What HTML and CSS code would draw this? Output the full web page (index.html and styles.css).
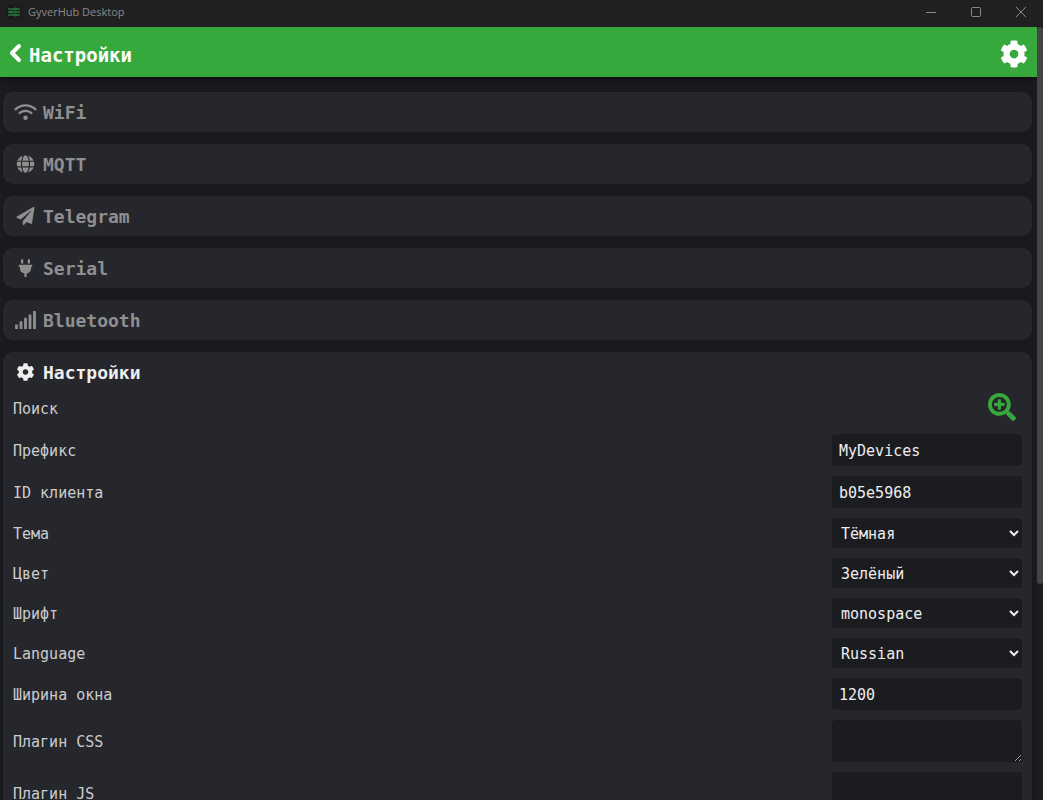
FILE: index.html
```html
<!DOCTYPE html>
<html lang="ru">
<head>
    <meta charset="UTF-8">
    <meta name="viewport" content="width=device-width, initial-scale=1.0">
    <title>GyverHub Desktop</title>
    <link rel="stylesheet" href="styles.css">
</head>
<body>
    <div class="titlebar">
        <svg class="app-icon" viewBox="0 0 16 16">
            <path d="M2 5h6M11 5h3M2 8h2M7 8h7M2 11h6M11 11h3"/>
            <circle cx="9.5" cy="5" r="1"/>
            <circle cx="5.5" cy="8" r="1"/>
            <circle cx="9.5" cy="11" r="1"/>
        </svg>
        <span class="app-name">GyverHub Desktop</span>
        <div class="win-buttons">
            <button aria-label="Свернуть"><svg viewBox="0 0 10 10"><path d="M0 5.5h10"/></svg></button>
            <button aria-label="Развернуть"><svg viewBox="0 0 10 10"><rect x=".5" y=".5" width="9" height="9" rx="1"/></svg></button>
            <button aria-label="Закрыть"><svg viewBox="0 0 10 10"><path d="M0 0l10 10M10 0L0 10"/></svg></button>
        </div>
    </div>

    <div class="window">
        <div class="page">
            <header class="header">
                <button class="back">
                    <svg viewBox="0 0 14 22"><path d="M11 4L4 11l7 7"/></svg>
                    <span>Настройки</span>
                </button>
                <button class="menu" aria-label="Меню">
                    <svg viewBox="0 0 512 512"><path d="M487.4 315.7l-42.6-24.6c4.3-23.2 4.3-47 0-70.2l42.6-24.6c4.9-2.8 7.1-8.6 5.5-14-11.1-35.6-30-67.8-54.7-94.6-3.8-4.1-10-5.1-14.8-2.3L380.8 110c-17.9-15.4-38.5-27.3-60.8-35.1V25.8c0-5.6-3.9-10.5-9.4-11.7-36.7-8.2-74.3-7.8-109.2 0-5.5 1.2-9.4 6.1-9.4 11.7V75c-22.2 7.9-42.8 19.8-60.8 35.1L88.7 85.5c-4.9-2.8-11-1.9-14.8 2.3-24.7 26.7-43.6 58.9-54.7 94.6-1.7 5.4.6 11.2 5.5 14L67.3 221c-4.3 23.2-4.3 47 0 70.2l-42.6 24.6c-4.9 2.8-7.1 8.6-5.5 14 11.1 35.6 30 67.8 54.7 94.6 3.8 4.1 10 5.1 14.8 2.3l42.6-24.6c17.9 15.4 38.5 27.3 60.8 35.1v49.2c0 5.6 3.9 10.5 9.4 11.7 36.7 8.2 74.3 7.8 109.2 0 5.5-1.2 9.4-6.1 9.4-11.7v-49.2c22.2-7.9 42.8-19.8 60.8-35.1l42.6 24.6c4.9 2.8 11 1.9 14.8-2.3 24.7-26.7 43.6-58.9 54.7-94.6 1.5-5.5-.7-11.3-5.6-14.1zM256 336c-44.1 0-80-35.9-80-80s35.9-80 80-80 80 35.9 80 80-35.9 80-80 80z"/></svg>
                </button>
            </header>

            <main class="cards">
                <section class="card">
                    <button class="card-title">
                        <svg viewBox="0 0 640 512"><path d="M54.2 202.9C123.2 136.7 216.8 96 320 96s196.8 40.7 265.8 106.9c12.8 12.2 33 11.8 45.2-.9s11.8-33-.9-45.2C549.7 79.5 440.4 32 320 32S90.3 79.5 9.8 156.7C-2.9 169-3.3 189.2 8.9 202s32.5 13.2 45.2.9zM320 256c56.8 0 108.6 21.1 148.2 56 13.3 11.7 33.5 10.4 45.2-2.8s10.4-33.5-2.8-45.2C459.8 219.2 393 192 320 192s-139.8 27.2-190.5 72c-13.3 11.7-14.5 31.9-2.8 45.2s31.9 14.5 45.2 2.8c39.5-34.9 91.3-56 148.2-56zm64 160a64 64 0 1 0-128 0 64 64 0 1 0 128 0z"/></svg>
                        WiFi
                    </button>
                </section>
                <section class="card">
                    <button class="card-title">
                        <svg viewBox="0 0 496 512"><path d="M336.5 160C322 70.7 287.8 8 248 8s-74 62.7-88.5 152h177zM152 256c0 22.2 1.2 43.5 3.3 64h185.3c2.1-20.5 3.3-41.8 3.3-64s-1.2-43.5-3.3-64H155.3c-2.1 20.5-3.3 41.8-3.3 64zm324.7-96c-28.6-67.9-86.5-120.4-158-141.6 24.4 33.8 41.2 84.7 50 141.6h108zM177.2 18.4C105.8 39.6 47.8 92.1 19.3 160h108c8.7-56.9 25.5-107.8 49.9-141.6zM487.4 192H372.7c2.1 21 3.3 42.5 3.3 64s-1.2 43-3.3 64h114.6c5.5-20.5 8.6-41.8 8.6-64s-3.1-43.5-8.5-64zM120 256c0-21.5 1.2-43 3.3-64H8.6C3.2 212.5 0 233.8 0 256s3.2 43.5 8.6 64h114.6c-2-21-3.2-42.5-3.2-64zm39.5 96c14.5 89.3 48.7 152 88.5 152s74-62.7 88.5-152h-177zm159.3 141.6c71.4-21.2 129.4-73.7 158-141.6h-108c-8.8 56.9-25.6 107.8-50 141.6zM19.3 352c28.6 67.9 86.5 120.4 158 141.6-24.4-33.8-41.2-84.7-50-141.6h-108z"/></svg>
                        MQTT
                    </button>
                </section>
                <section class="card">
                    <button class="card-title">
                        <svg viewBox="0 0 512 512"><path d="M476 3.2L12.5 270.6c-18.1 10.4-15.8 35.6 2.2 43.2L121 358.4l287.3-253.2c5.5-4.9 13.3 2.6 8.6 8.3L176 407v80.5c0 23.6 28.5 32.9 42.5 15.8L282 426l124.6 52.2c14.2 6 30.4-2.9 33-18.2l72-432C515 7.8 493.3-6.8 476 3.2z"/></svg>
                        Telegram
                    </button>
                </section>
                <section class="card">
                    <button class="card-title">
                        <svg viewBox="0 0 384 512"><path d="M320 32a32 32 0 0 0-64 0v96h64zm48 128H16A16 16 0 0 0 0 176v32a16 16 0 0 0 16 16h16v32a160.07 160.07 0 0 0 128 156.8V512h64v-99.2A160.07 160.07 0 0 0 352 256v-32h16a16 16 0 0 0 16-16v-32a16 16 0 0 0-16-16zM128 32a32 32 0 0 0-64 0v96h64z"/></svg>
                        Serial
                    </button>
                </section>
                <section class="card">
                    <button class="card-title">
                        <svg viewBox="0 0 640 512">
                            <rect x="24" y="384" width="80" height="128" rx="16"/>
                            <rect x="152" y="288" width="80" height="224" rx="16"/>
                            <rect x="280" y="192" width="80" height="320" rx="16"/>
                            <rect x="408" y="96" width="80" height="416" rx="16"/>
                            <rect x="536" y="0" width="80" height="512" rx="16"/>
                        </svg>
                        Bluetooth
                    </button>
                </section>
                <section class="card open">
                    <button class="card-title">
                        <svg viewBox="0 0 512 512"><path d="M487.4 315.7l-42.6-24.6c4.3-23.2 4.3-47 0-70.2l42.6-24.6c4.9-2.8 7.1-8.6 5.5-14-11.1-35.6-30-67.8-54.7-94.6-3.8-4.1-10-5.1-14.8-2.3L380.8 110c-17.9-15.4-38.5-27.3-60.8-35.1V25.8c0-5.6-3.9-10.5-9.4-11.7-36.7-8.2-74.3-7.8-109.2 0-5.5 1.2-9.4 6.1-9.4 11.7V75c-22.2 7.9-42.8 19.8-60.8 35.1L88.7 85.5c-4.9-2.8-11-1.9-14.8 2.3-24.7 26.7-43.6 58.9-54.7 94.6-1.7 5.4.6 11.2 5.5 14L67.3 221c-4.3 23.2-4.3 47 0 70.2l-42.6 24.6c-4.9 2.8-7.1 8.6-5.5 14 11.1 35.6 30 67.8 54.7 94.6 3.8 4.1 10 5.1 14.8 2.3l42.6-24.6c17.9 15.4 38.5 27.3 60.8 35.1v49.2c0 5.6 3.9 10.5 9.4 11.7 36.7 8.2 74.3 7.8 109.2 0 5.5-1.2 9.4-6.1 9.4-11.7v-49.2c22.2-7.9 42.8-19.8 60.8-35.1l42.6 24.6c4.9 2.8 11 1.9 14.8-2.3 24.7-26.7 43.6-58.9 54.7-94.6 1.5-5.5-.7-11.3-5.6-14.1zM256 336c-44.1 0-80-35.9-80-80s35.9-80 80-80 80 35.9 80 80-35.9 80-80 80z"/></svg>
                        Настройки
                    </button>
                    <div class="rows">
                        <div class="row">
                            <label for="search">Поиск</label>
                            <button class="search" id="search">
                                <svg viewBox="0 0 512 512"><path d="M304 192v32c0 6.6-5.4 12-12 12h-56v56c0 6.6-5.4 12-12 12h-32c-6.6 0-12-5.4-12-12v-56h-56c-6.6 0-12-5.4-12-12v-32c0-6.6 5.4-12 12-12h56v-56c0-6.6 5.4-12 12-12h32c6.6 0 12 5.4 12 12v56h56c6.6 0 12 5.4 12 12zm201 284.7L476.7 505c-9.4 9.4-24.6 9.4-33.9 0L343 405.3c-4.5-4.5-7-10.6-7-17V372c-35.3 27.6-79.7 44-128 44C93.1 416 0 322.9 0 208S93.1 0 208 0s208 93.1 208 208c0 48.3-16.4 92.7-44 128h16.3c6.4 0 12.5 2.5 17 7l99.7 99.7c9.3 9.4 9.3 24.6 0 34zM344 208c0-75.2-60.8-136-136-136S72 132.8 72 208s60.8 136 136 136 136-60.8 136-136z"/></svg>
                            </button>
                        </div>
                        <div class="row">
                            <label for="prefix">Префикс</label>
                            <input class="field" type="text" id="prefix" value="MyDevices">
                        </div>
                        <div class="row">
                            <label for="client">ID клиента</label>
                            <input class="field" type="text" id="client" value="b05e5968">
                        </div>
                        <div class="row">
                            <label for="theme">Тема</label>
                            <select class="field" id="theme"><option>Тёмная</option></select>
                        </div>
                        <div class="row">
                            <label for="color">Цвет</label>
                            <select class="field" id="color"><option>Зелёный</option></select>
                        </div>
                        <div class="row">
                            <label for="font">Шрифт</label>
                            <select class="field" id="font"><option>monospace</option></select>
                        </div>
                        <div class="row">
                            <label for="lang">Language</label>
                            <select class="field" id="lang"><option>Russian</option></select>
                        </div>
                        <div class="row">
                            <label for="width">Ширина окна</label>
                            <input class="field" type="text" id="width" value="1200">
                        </div>
                        <div class="row">
                            <label for="css">Плагин CSS</label>
                            <textarea class="field" id="css"></textarea>
                        </div>
                        <div class="row">
                            <label for="js">Плагин JS</label>
                            <textarea class="field" id="js"></textarea>
                        </div>
                    </div>
                </section>
            </main>
        </div>
        <div class="scrollbar"><div class="thumb"></div></div>
    </div>
</body>
</html>
```
FILE: styles.css
```css
* {
    box-sizing: border-box;
}
body {
    display: flex;
    flex-direction: column;
    height: 100vh;
    margin: 0;
    overflow: hidden;
    background: #1b1c20;
    color: #ccc;
    font-family: "DejaVu Sans Mono", monospace;
    font-size: 15px;
}
button {
    padding: 0;
    border: none;
    background: none;
    color: inherit;
    font: inherit;
    cursor: pointer;
}
svg {
    display: block;
    fill: currentColor;
}

/* window frame */
.titlebar {
    display: flex;
    flex-shrink: 0;
    align-items: center;
    gap: 6px;
    height: 27px;
    padding: 0 0 4px 6px;
    background: #202020;
    color: #8a8a8a;
    font-family: "Open Sans", sans-serif;
    font-size: 11px;
}
.app-icon {
    width: 16px;
    height: 16px;
    background: #1b1c20;
    fill: none;
    stroke: #2f9e44;
}
.win-buttons {
    display: flex;
    margin-left: auto;
}
.win-buttons button {
    display: flex;
    justify-content: center;
    width: 45px;
}
.win-buttons svg {
    width: 10px;
    height: 10px;
    fill: none;
    stroke: #8a8a8a;
}
.window {
    display: flex;
    flex: 1;
    min-height: 0;
}
.page {
    flex: 1;
    overflow: hidden;
}
.scrollbar {
    width: 6px;
}
.thumb {
    height: 72%;
    border-radius: 3px;
    background: #444;
}

/* header */
.header {
    display: flex;
    align-items: center;
    justify-content: space-between;
    height: 50px;
    padding: 3px 9px 0 8px;
    background: #37a93c;
    box-shadow: 0 0 8px #000;
    color: #fff;
}
.back {
    display: flex;
    align-items: center;
    gap: 7px;
    padding-top: 3px;
    font-size: 19px;
    font-weight: bold;
}
.back svg {
    width: 14px;
    height: 22px;
    margin-bottom: 4px;
    fill: none;
    stroke: currentColor;
    stroke-width: 4;
    stroke-linecap: round;
    stroke-linejoin: round;
}
.menu svg {
    width: 28px;
    height: 28px;
}

/* cards */
.cards {
    display: flex;
    flex-direction: column;
    gap: 12px;
    padding: 15px 5px 15px 3px;
}
.card {
    padding: 0 10px;
    border-radius: 10px;
    background: #26272c;
    box-shadow: 0 0 8px #17181b;
}
.card-title {
    display: flex;
    align-items: center;
    gap: 5px;
    width: 100%;
    height: 40px;
    color: #8f8f8f;
    font-size: 18px;
    font-weight: bold;
}
.card-title svg {
    width: 25px;
    height: 18px;
}
.open {
    padding-bottom: 10px;
}
.open .card-title {
    color: #eee;
}

/* settings */
.rows {
    display: flex;
    flex-direction: column;
    gap: 10px;
}
.row {
    display: flex;
    align-items: center;
    justify-content: space-between;
}
.row label {
    padding-top: 2px;
}
.search {
    height: 32px;
    padding: 0 6px 2px;
    color: #37a93c;
}
.search svg {
    width: 28px;
    height: 28px;
}
.field {
    width: 190px;
    height: 32px;
    padding: 2px 7px 0;
    border: none;
    border-radius: 4px;
    background: #1b1c20;
    color: #eee;
    font: inherit;
}
select.field {
    height: 30px;
    padding: 2px 5px 0;
}
textarea.field {
    height: 42px;
}
```
